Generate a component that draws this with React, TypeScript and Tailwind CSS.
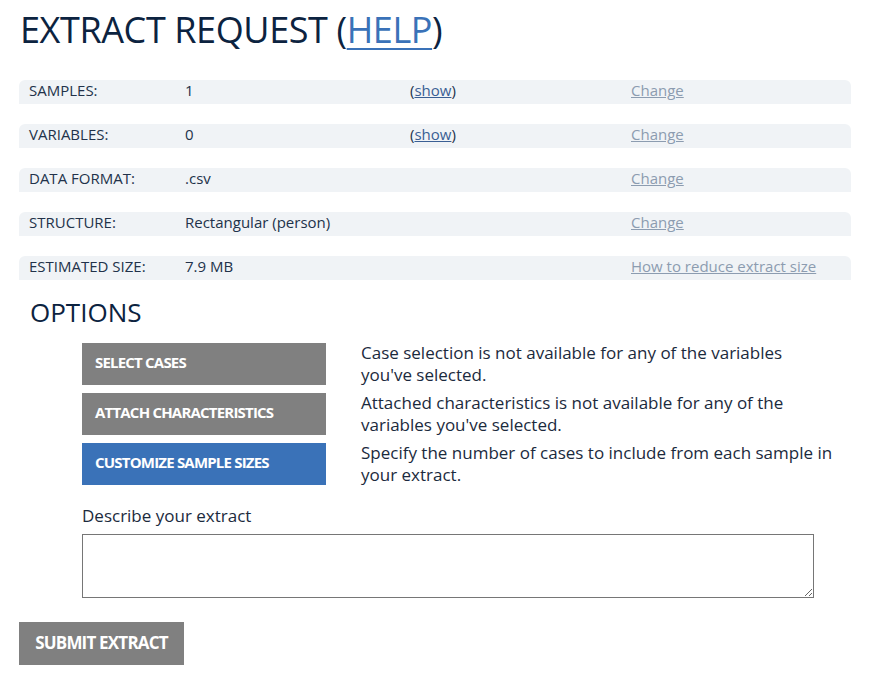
import React from 'react';

type Row = {
    label: string;
    value: string;
    show?: boolean;
    link: string;
};

const rows: Row[] = [
    { label: 'SAMPLES:', value: '1', show: true, link: 'Change' },
    { label: 'VARIABLES:', value: '0', show: true, link: 'Change' },
    { label: 'DATA FORMAT:', value: '.csv', link: 'Change' },
    { label: 'STRUCTURE:', value: 'Rectangular (person)', link: 'Change' },
    { label: 'ESTIMATED SIZE:', value: '7.9 MB', link: 'How to reduce extract size' },
];

const options = [
    {
        title: 'SELECT CASES',
        text: "Case selection is not available for any of the variables you've selected.",
        active: false,
    },
    {
        title: 'ATTACH CHARACTERISTICS',
        text: "Attached characteristics is not available for any of the variables you've selected.",
        active: false,
    },
    {
        title: 'CUSTOMIZE SAMPLE SIZES',
        text: 'Specify the number of cases to include from each sample in your extract.',
        active: true,
    },
];

const App = () => {
    return (
        <div className="min-h-screen bg-white font-['Open_Sans',sans-serif] text-[#1b2a3d]">
            <div className="w-[885px] px-[19px] pt-[8px]">
                {/* Header */}
                <h1 className="pl-[1px] text-[36px] leading-[44px] font-normal tracking-[-0.4px] text-[#0c2340]">
                    EXTRACT REQUEST (
                    <a href="#" className="text-[#3a72b8] underline decoration-2 underline-offset-[5px]">
                        HELP
                    </a>
                    )
                </h1>

                {/* Summary rows */}
                <div className="mt-[28px] flex w-[832px] flex-col gap-[20px]">
                    {rows.map((row) => (
                        <div
                            key={row.label}
                            className="flex h-[24px] items-center rounded-t-md bg-[#f0f3f6] pb-[4px] text-[15px] leading-[20px] text-[#22324a]"
                        >
                            <span className="w-[166px] pl-[10px]">{row.label}</span>
                            <span className="w-[225px]">{row.value}</span>
                            <span className="w-[221px]">
                                {row.show && (
                                    <>
                                        (
                                        <a href="#" className="text-[#3a5f94] underline">
                                            show
                                        </a>
                                        )
                                    </>
                                )}
                            </span>
                            <a href="#" className="text-[#8c9cb0] underline">
                                {row.link}
                            </a>
                        </div>
                    ))}
                </div>

                {/* Options */}
                <h2 className="mt-[14px] pl-[11px] text-[26px] leading-[36px] text-[#0c2340]">OPTIONS</h2>

                <div className="mt-[13px] flex flex-col gap-[8px] pl-[63px]">
                    {options.map((opt) => (
                        <div key={opt.title} className="flex h-[42px] items-start gap-[35px]">
                            <button
                                className={`flex h-[42px] w-[244px] shrink-0 items-center pb-[3px] pl-[13px] text-left text-[15px] font-bold tracking-[-0.8px] text-white ${
                                    opt.active ? 'bg-[#3a72b8]' : 'bg-[#808080]'
                                }`}
                            >
                                {opt.title}
                            </button>
                            <p className="-mt-[1px] w-[474px] text-[17px] leading-[22px]">{opt.text}</p>
                        </div>
                    ))}
                </div>

                {/* Description */}
                <div className="mt-[18px] pl-[63px]">
                    <label className="block text-[17px] leading-[26px]">Describe your extract</label>
                    <textarea className="mt-[5px] block h-[64px] w-[732px] border border-[#767676] bg-white" />
                </div>

                <button className="mt-[24px] h-[43px] w-[165px] bg-[#808080] pb-[2px] text-[17px] font-bold tracking-[-0.8px] text-white">
                    SUBMIT EXTRACT
                </button>
            </div>
        </div>
    );
};

export default App;
